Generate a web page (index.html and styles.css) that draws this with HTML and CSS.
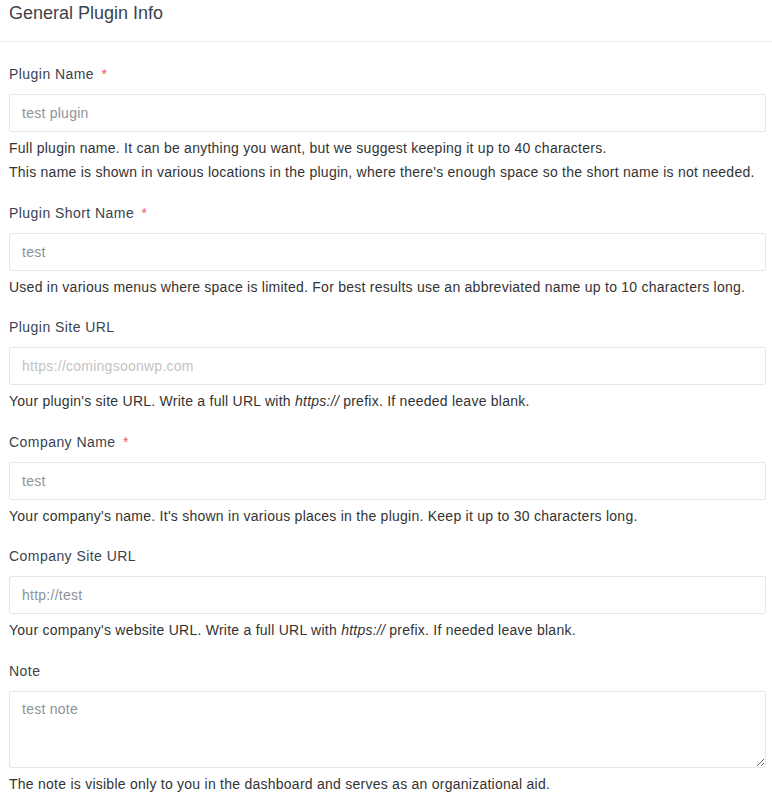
FILE: index.html
```html
<!DOCTYPE html>
<html lang="en">
<head>
    <meta charset="UTF-8">
    <meta name="viewport" content="width=device-width, initial-scale=1.0">
    <title>General Plugin Info</title>
    <link rel="stylesheet" href="styles.css">
</head>
<body>
    <div class="panel-head">
        <h2>General Plugin Info</h2>
    </div>

    <div class="panel-body">
        <div class="form-group">
            <label for="plugin-name">Plugin Name <span class="req">*</span></label>
            <input type="text" id="plugin-name" value="test plugin">
            <p class="help">Full plugin name. It can be anything you want, but we suggest keeping it up to 40 characters.<br>This name is shown in various locations in the plugin, where there's enough space so the short name is not needed.</p>
        </div>

        <div class="form-group">
            <label for="short-name">Plugin Short Name <span class="req">*</span></label>
            <input type="text" id="short-name" value="test">
            <p class="help">Used in various menus where space is limited. For best results use an abbreviated name up to 10 characters long.</p>
        </div>

        <div class="form-group">
            <label for="site-url">Plugin Site URL</label>
            <input type="text" id="site-url" placeholder="https://comingsoonwp.com">
            <p class="help">Your plugin's site URL. Write a full URL with <i>https://</i> prefix. If needed leave blank.</p>
        </div>

        <div class="form-group">
            <label for="company-name">Company Name <span class="req">*</span></label>
            <input type="text" id="company-name" value="test">
            <p class="help">Your company's name. It's shown in various places in the plugin. Keep it up to 30 characters long.</p>
        </div>

        <div class="form-group">
            <label for="company-url">Company Site URL</label>
            <input type="text" id="company-url" value="http://test">
            <p class="help">Your company's website URL. Write a full URL with <i>https://</i> prefix. If needed leave blank.</p>
        </div>

        <div class="form-group">
            <label for="note">Note</label>
            <textarea id="note">test note</textarea>
            <p class="help">The note is visible only to you in the dashboard and serves as an organizational aid.</p>
        </div>
    </div>
</body>
</html>
```

FILE: styles.css
```css
body {
    font-family: "Liberation Sans", Arial, sans-serif;
    margin: 0;
    padding: 0;
    background: #fff;
    color: #333;
}
.panel-head {
    height: 41px;
    padding: 0 9px;
    border-bottom: 1px solid #eeeeee;
}
.panel-head h2 {
    margin: 0;
    font-size: 18px;
    font-weight: normal;
    line-height: 26px;
    color: #3c434a;
}
.panel-body {
    padding: 22px 6px 0 9px;
}
.form-group {
    margin-bottom: 18.5px;
}
.form-group label {
    display: block;
    font-size: 14px;
    line-height: 20px;
    letter-spacing: 0.45px;
    color: #3a4350;
    margin-bottom: 10px;
}
.req {
    color: #ef5a5a;
    margin-left: 3px;
}
.form-group input,
.form-group textarea {
    display: block;
    width: 100%;
    box-sizing: border-box;
    height: 38px;
    padding: 0 12px;
    border: 1px solid #e6e6e6;
    border-radius: 2px;
    font-family: "Liberation Sans", Arial, sans-serif;
    font-size: 14px;
    letter-spacing: 0.25px;
    color: #8c939b;
    background: #fff;
    outline: none;
}
.form-group input::placeholder {
    color: #c3c3c3;
}
.form-group textarea {
    height: 77px;
    padding: 7px 12px;
    line-height: 20px;
    resize: vertical;
}
.help {
    margin: 4px 0 0;
    font-size: 14px;
    line-height: 24px;
    letter-spacing: 0.25px;
    color: #333;
}
```
